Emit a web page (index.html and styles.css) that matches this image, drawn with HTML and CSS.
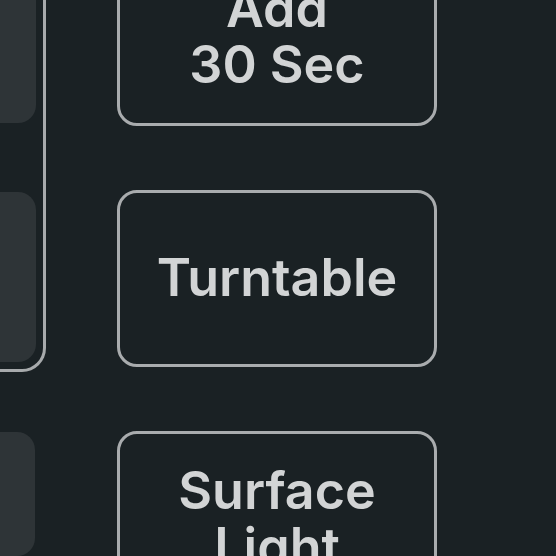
FILE: index.html
```html
<!DOCTYPE html>
<html>
<head>
<meta charset="utf-8">
<link rel="stylesheet" href="styles.css">
</head>
<body>
<div class="screen">
  <div class="side">
    <div class="panel">
      <div class="tile"></div>
      <div class="tile"></div>
    </div>
    <div class="tile tile-loose"></div>
  </div>
  <div class="buttons">
    <div class="btn">Add<br>30 Sec</div>
    <div class="btn">Turntable</div>
    <div class="btn">Surface<br>Light</div>
  </div>
</div>
</body>
</html>
```
FILE: styles.css
```css
html, body {
  margin: 0;
  padding: 0;
  background: #1a2124;
}
.screen {
  width: 556px;
  height: 556px;
  overflow: hidden;
  display: flex;
  background: #1a2124;
}
.side {
  width: 46px;
  flex: none;
  display: flex;
  flex-direction: column;
  align-items: flex-end;
}
.panel {
  margin-top: -60px;
  width: 60px;
  border: 3px solid #a7aaac;
  border-left: none;
  border-radius: 0 24px 24px 0;
  padding: 10px 7px 7px 0;
  display: flex;
  flex-direction: column;
  gap: 69px;
  align-items: flex-end;
}
.tile {
  width: 60px;
  height: 170px;
  background: #2e3437;
  border-radius: 0 18px 18px 0;
}
.tile-loose {
  margin-top: 60px;
  margin-right: 11px;
}
.buttons {
  margin-left: 71px;
  margin-top: -51px;
  width: 320px;
  flex: none;
  display: flex;
  flex-direction: column;
  gap: 64px;
}
.btn {
  box-sizing: border-box;
  height: 177px;
  flex: none;
  border: 3px solid #a9acae;
  border-radius: 20px;
  display: flex;
  align-items: center;
  justify-content: center;
  text-align: center;
  font-family: "Inter", "Liberation Sans", sans-serif;
  font-weight: 600;
  font-size: 52px;
  line-height: 56px;
  color: #d2d4d5;
  padding-bottom: 2px;
}
```
